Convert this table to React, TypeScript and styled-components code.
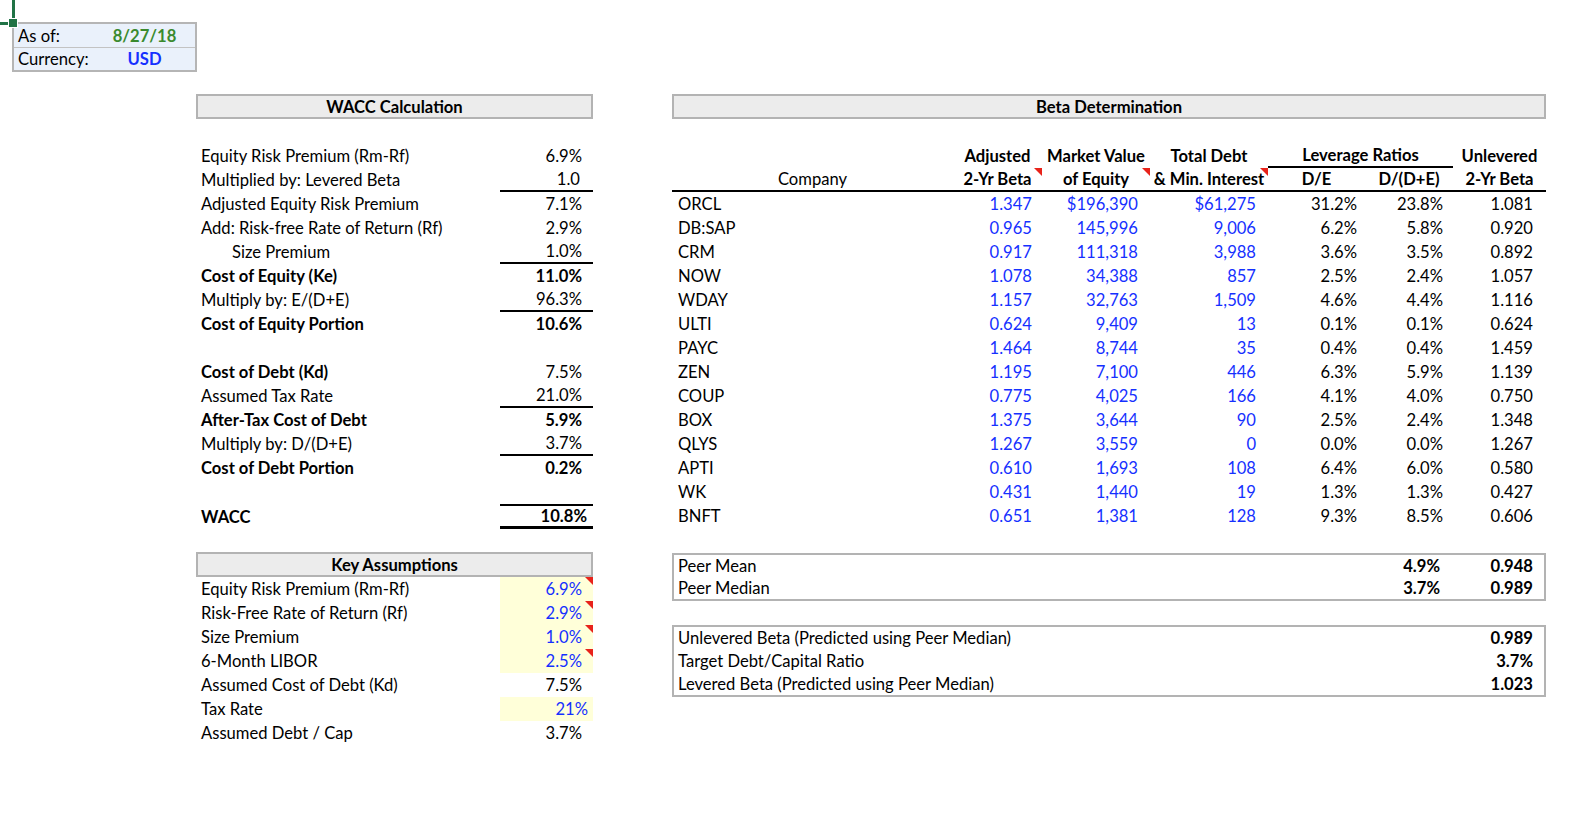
import React from "react";
import styled, { createGlobalStyle } from "styled-components";

const GlobalStyle = createGlobalStyle`
  html, body { margin: 0; padding: 0; background: #ffffff; }
  body {
    font-family: Lato, "Open Sans", "Noto Sans", sans-serif;
    font-size: 16.6px;
    color: #000;
  }
  * { box-sizing: border-box; }
`;

const BLUE = "#1530ff";
const GREEN = "#3a8a2e";
const HEAD_BG = "#ececec";
const BOX_BORDER = "#b3b3b3";
const YELLOW = "#ffffd9";

const Sheet = styled.div`
  position: relative;
  width: 1578px;
  height: 832px;
  padding: 22px 0 0 12px;
  overflow: hidden;
`;

const CursorV = styled.span`
  position: absolute;
  left: 12px;
  top: 0;
  width: 3px;
  height: 18px;
  background: #217346;
`;
const CursorH = styled.span`
  position: absolute;
  left: 0;
  top: 22px;
  width: 9px;
  height: 3px;
  background: #217346;
`;
const CursorHandle = styled.span`
  position: absolute;
  left: 8px;
  top: 18px;
  width: 10px;
  height: 10px;
  background: #217346;
  border: 1px solid #ffffff;
`;

const InfoBox = styled.div`
  width: 185px;
  border: 2px solid #b5b5b5;
  background: #eaf1fb;
`;
const InfoRow = styled.div`
  display: grid;
  grid-template-columns: 80px 1fr;
  height: 23px;
  align-items: center;
  & + & { border-top: 1px solid #c3c3c3; height: 23px; }
`;
const InfoLabel = styled.span`
  padding-left: 4px;
`;
const InfoValue = styled.span<{ $color: string }>`
  text-align: center;
  font-weight: 700;
  color: ${(p) => p.$color};
`;

const Main = styled.div`
  display: flex;
  gap: 79px;
  margin: 22px 0 0 184px;
`;

const LeftPanel = styled.section`
  width: 397px;
  display: flex;
  flex-direction: column;
`;
const RightPanel = styled.section`
  width: 874px;
  display: flex;
  flex-direction: column;
`;

const SectionHeader = styled.div<{ $mt?: number }>`
  height: 25px;
  margin-top: ${(p) => p.$mt ?? 0}px;
  border: 2px solid ${BOX_BORDER};
  background: ${HEAD_BG};
  font-weight: 700;
  display: flex;
  align-items: center;
  justify-content: center;
`;

const RowList = styled.div<{ $mt: number }>`
  margin-top: ${(p) => p.$mt}px;
  display: flex;
  flex-direction: column;
`;

const CalcRow = styled.div`
  display: grid;
  grid-template-columns: 304px 93px;
  height: 24px;
`;

const CalcLabel = styled.div<{ $bold?: boolean; $indent?: number }>`
  display: flex;
  align-items: center;
  padding-left: ${(p) => 5 + (p.$indent ?? 0)}px;
  font-weight: ${(p) => (p.$bold ? 700 : 400)};
  white-space: nowrap;
`;

const CalcValue = styled.div<{
  $bold?: boolean;
  $under?: boolean;
  $total?: boolean;
  $fill?: boolean;
  $blue?: boolean;
  $pad?: number;
}>`
  position: relative;
  display: flex;
  align-items: center;
  justify-content: flex-end;
  padding-right: ${(p) => p.$pad ?? 11}px;
  font-weight: ${(p) => (p.$bold ? 700 : 400)};
  color: ${(p) => (p.$blue ? BLUE : "#000")};
  background: ${(p) => (p.$fill ? YELLOW : "transparent")};
  border-bottom: ${(p) => (p.$total ? "3px solid #000" : p.$under ? "2px solid #000" : "none")};
  border-top: ${(p) => (p.$total ? "2px solid #000" : "none")};
`;

const CommentMark = styled.span`
  position: absolute;
  top: 0;
  right: 0;
  width: 0;
  height: 0;
  border-top: 8px solid #e8231a;
  border-left: 8px solid transparent;
`;

const COLS = "281px 89px 108px 118px 97px 88px 93px";
const PADS = [6, 10, 12, 12, 8, 10, 13];

const BetaGrid = styled.div`
  margin-top: 25px;
  display: grid;
  grid-template-columns: ${COLS};
  grid-auto-rows: 24px;
`;

const HeadCell = styled.div<{ $span?: number; $rule?: boolean; $thick?: boolean }>`
  position: relative;
  grid-column: span ${(p) => p.$span ?? 1};
  display: flex;
  align-items: center;
  justify-content: center;
  font-weight: 700;
  white-space: nowrap;
  border-bottom: ${(p) => (p.$thick ? "2px solid #000" : p.$rule ? "2px solid #000" : "none")};
`;

const PlainHead = styled(HeadCell)`
  font-weight: 400;
`;

const CompanyCell = styled.div`
  display: flex;
  align-items: center;
  padding-left: 6px;
`;

const NumCell = styled.div<{ $blue?: boolean; $pad: number; $bold?: boolean }>`
  display: flex;
  align-items: center;
  justify-content: flex-end;
  padding-right: ${(p) => p.$pad}px;
  color: ${(p) => (p.$blue ? BLUE : "#000")};
  font-weight: ${(p) => (p.$bold ? 700 : 400)};
`;

const SummaryBox = styled.div<{ $mt: number; $rowH: number }>`
  margin-top: ${(p) => p.$mt}px;
  border: 2px solid ${BOX_BORDER};
  display: grid;
  grid-template-columns: 279px 89px 108px 118px 97px 88px 91px;
  grid-auto-rows: ${(p) => p.$rowH}px;
`;

const SummaryLabel = styled.div<{ $span: number }>`
  grid-column: span ${(p) => p.$span};
  display: flex;
  align-items: center;
  padding-left: 4px;
  white-space: nowrap;
`;

type CalcItem = {
  label: string;
  value: string;
  bold?: boolean;
  plainValue?: boolean;
  under?: boolean;
  total?: boolean;
  indent?: number;
  pad?: number;
};

const calcRows: (CalcItem | null)[] = [
  { label: "Equity Risk Premium (Rm-Rf)", value: "6.9%" },
  { label: "Multiplied by: Levered Beta", value: "1.0", under: true, pad: 13 },
  { label: "Adjusted Equity Risk Premium", value: "7.1%" },
  { label: "Add: Risk-free Rate of Return (Rf)", value: "2.9%" },
  { label: "Size Premium", value: "1.0%", under: true, indent: 31 },
  { label: "Cost of Equity (Ke)", value: "11.0%", bold: true },
  { label: "Multiply by: E/(D+E)", value: "96.3%", under: true },
  { label: "Cost of Equity Portion", value: "10.6%", bold: true },
  null,
  { label: "Cost of Debt (Kd)", value: "7.5%", bold: true, plainValue: true },
  { label: "Assumed Tax Rate", value: "21.0%", under: true },
  { label: "After-Tax Cost of Debt", value: "5.9%", bold: true },
  { label: "Multiply by: D/(D+E)", value: "3.7%", under: true },
  { label: "Cost of Debt Portion", value: "0.2%", bold: true },
  null,
  { label: "WACC", value: "10.8%", bold: true, total: true, pad: 6 },
];

type KeyItem = { label: string; value: string; input?: boolean; mark?: boolean; pad?: number };

const keyRows: KeyItem[] = [
  { label: "Equity Risk Premium (Rm-Rf)", value: "6.9%", input: true, mark: true },
  { label: "Risk-Free Rate of Return (Rf)", value: "2.9%", input: true, mark: true },
  { label: "Size Premium", value: "1.0%", input: true, mark: true },
  { label: "6-Month LIBOR", value: "2.5%", input: true, mark: true },
  { label: "Assumed Cost of Debt (Kd)", value: "7.5%" },
  { label: "Tax Rate", value: "21%", input: true, pad: 5 },
  { label: "Assumed Debt / Cap", value: "3.7%" },
];

const comps: [string, string, string, string, string, string, string][] = [
  ["ORCL", "1.347", "$196,390", "$61,275", "31.2%", "23.8%", "1.081"],
  ["DB:SAP", "0.965", "145,996", "9,006", "6.2%", "5.8%", "0.920"],
  ["CRM", "0.917", "111,318", "3,988", "3.6%", "3.5%", "0.892"],
  ["NOW", "1.078", "34,388", "857", "2.5%", "2.4%", "1.057"],
  ["WDAY", "1.157", "32,763", "1,509", "4.6%", "4.4%", "1.116"],
  ["ULTI", "0.624", "9,409", "13", "0.1%", "0.1%", "0.624"],
  ["PAYC", "1.464", "8,744", "35", "0.4%", "0.4%", "1.459"],
  ["ZEN", "1.195", "7,100", "446", "6.3%", "5.9%", "1.139"],
  ["COUP", "0.775", "4,025", "166", "4.1%", "4.0%", "0.750"],
  ["BOX", "1.375", "3,644", "90", "2.5%", "2.4%", "1.348"],
  ["QLYS", "1.267", "3,559", "0", "0.0%", "0.0%", "1.267"],
  ["APTI", "0.610", "1,693", "108", "6.4%", "6.0%", "0.580"],
  ["WK", "0.431", "1,440", "19", "1.3%", "1.3%", "0.427"],
  ["BNFT", "0.651", "1,381", "128", "9.3%", "8.5%", "0.606"],
];

export default function App() {
  return (
    <>
      <GlobalStyle />
      <Sheet>
        <CursorV />
        <CursorH />
        <CursorHandle />

        <InfoBox>
          <InfoRow>
            <InfoLabel>As of:</InfoLabel>
            <InfoValue $color={GREEN}>8/27/18</InfoValue>
          </InfoRow>
          <InfoRow>
            <InfoLabel>Currency:</InfoLabel>
            <InfoValue $color={BLUE}>USD</InfoValue>
          </InfoRow>
        </InfoBox>

        <Main>
          <LeftPanel>
            <SectionHeader>WACC Calculation</SectionHeader>
            <RowList $mt={25}>
              {calcRows.map((r, i) =>
                r ? (
                  <CalcRow key={i}>
                    <CalcLabel $bold={r.bold} $indent={r.indent}>
                      {r.label}
                    </CalcLabel>
                    <CalcValue
                      $bold={r.bold && !r.plainValue}
                      $under={r.under}
                      $total={r.total}
                      $pad={r.pad}
                    >
                      {r.value}
                    </CalcValue>
                  </CalcRow>
                ) : (
                  <CalcRow key={i} />
                )
              )}
            </RowList>

            <SectionHeader $mt={24}>Key Assumptions</SectionHeader>
            <RowList $mt={0}>
              {keyRows.map((r, i) => (
                <CalcRow key={i}>
                  <CalcLabel>{r.label}</CalcLabel>
                  <CalcValue $fill={r.input} $blue={r.input} $pad={r.pad}>
                    {r.value}
                    {r.mark && <CommentMark />}
                  </CalcValue>
                </CalcRow>
              ))}
            </RowList>
          </LeftPanel>

          <RightPanel>
            <SectionHeader>Beta Determination</SectionHeader>
            <BetaGrid>
              <HeadCell />
              <HeadCell>Adjusted</HeadCell>
              <HeadCell>Market Value</HeadCell>
              <HeadCell>Total Debt</HeadCell>
              <HeadCell $span={2} $rule>
                Leverage Ratios
              </HeadCell>
              <HeadCell>Unlevered</HeadCell>

              <PlainHead $thick>Company</PlainHead>
              <HeadCell $thick>
                2-Yr Beta
                <CommentMark />
              </HeadCell>
              <HeadCell $thick>
                of Equity
                <CommentMark />
              </HeadCell>
              <HeadCell $thick>
                &amp; Min. Interest
                <CommentMark />
              </HeadCell>
              <HeadCell $thick>D/E</HeadCell>
              <HeadCell $thick>D/(D+E)</HeadCell>
              <HeadCell $thick>2-Yr Beta</HeadCell>

              {comps.map((c) => (
                <React.Fragment key={c[0]}>
                  <CompanyCell>{c[0]}</CompanyCell>
                  {c.slice(1).map((v, j) => (
                    <NumCell key={j} $pad={PADS[j + 1]} $blue={j < 3}>
                      {v}
                    </NumCell>
                  ))}
                </React.Fragment>
              ))}
            </BetaGrid>

            <SummaryBox $mt={25} $rowH={22}>
              <SummaryLabel $span={5}>Peer Mean</SummaryLabel>
              <NumCell $pad={13} $bold>4.9%</NumCell>
              <NumCell $pad={11} $bold>0.948</NumCell>
              <SummaryLabel $span={5}>Peer Median</SummaryLabel>
              <NumCell $pad={13} $bold>3.7%</NumCell>
              <NumCell $pad={11} $bold>0.989</NumCell>
            </SummaryBox>

            <SummaryBox $mt={24} $rowH={22.67}>
              <SummaryLabel $span={6}>Unlevered Beta (Predicted using Peer Median)</SummaryLabel>
              <NumCell $pad={11} $bold>0.989</NumCell>
              <SummaryLabel $span={6}>Target Debt/Capital Ratio</SummaryLabel>
              <NumCell $pad={11} $bold>3.7%</NumCell>
              <SummaryLabel $span={6}>Levered Beta (Predicted using Peer Median)</SummaryLabel>
              <NumCell $pad={11} $bold>1.023</NumCell>
            </SummaryBox>
          </RightPanel>
        </Main>
      </Sheet>
    </>
  );
}
